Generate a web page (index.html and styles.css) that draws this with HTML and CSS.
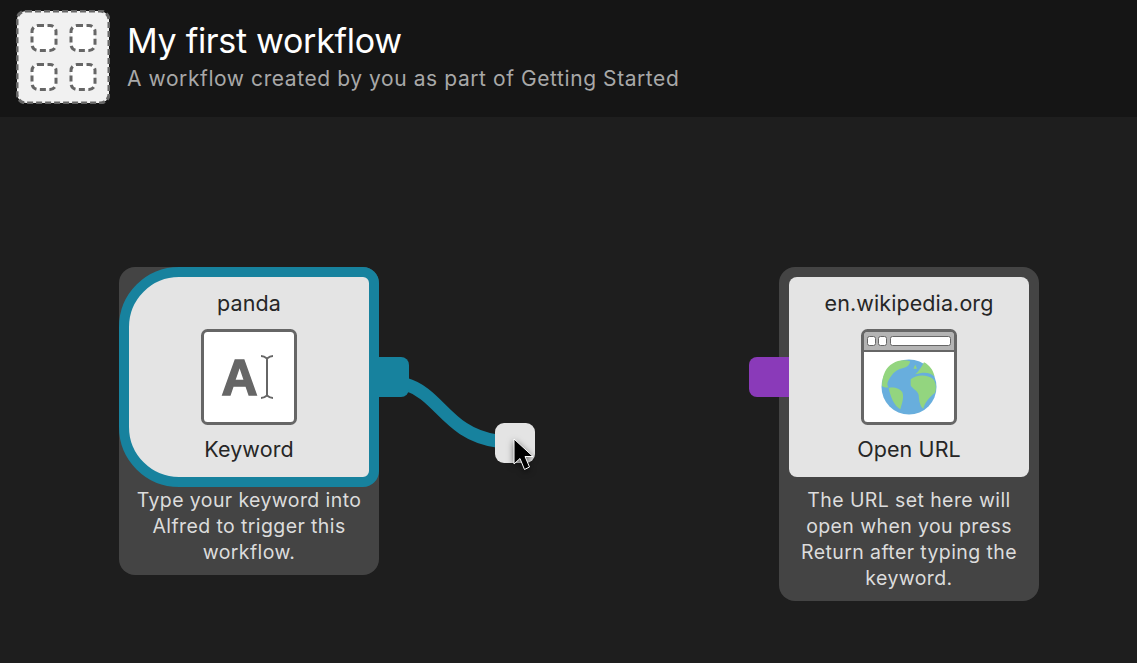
FILE: index.html
```html
<!DOCTYPE html>
<html lang="en">
<head>
<meta charset="utf-8">
<title>My first workflow</title>
<link rel="stylesheet" href="styles.css">
</head>
<body>
<header class="header">
  <svg class="wf-icon" viewBox="0 0 94 94" aria-hidden="true">
    <rect class="wf-back" x="1" y="1" width="92" height="92" rx="9"/>
    <rect class="wf-slot" x="16" y="15.500" width="24" height="25" rx="6"/>
    <rect class="wf-slot" x="55" y="15.500" width="24" height="25" rx="6"/>
    <rect class="wf-slot" x="16" y="54.500" width="24" height="25" rx="6"/>
    <rect class="wf-slot" x="55" y="54.500" width="24" height="25" rx="6"/>
  </svg>
  <div class="header-text">
    <h1 class="title">My first workflow</h1>
    <p class="subtitle">A workflow created by you as part of Getting Started</p>
  </div>
</header>

<main class="canvas">
  <svg class="wire" viewBox="0 0 130 90" aria-hidden="true">
    <path d="M0 18 C 35 28, 42 68, 92 75" />
  </svg>

  <section class="node node-keyword">
    <div class="card card-selected">
      <div class="card-name">panda</div>
      <svg class="tile" viewBox="0 0 96 96" aria-hidden="true">
        <rect class="tile-frame" x="1.500" y="1.500" width="93" height="93" rx="5"/>
        <text class="tile-letter" x="20.500" y="65.500">A</text>
        <path class="tile-beam" d="M60 27 Q63 27 66 29.500 Q69 27 72 27 M66 29.500 V66.500 M60 69 Q63 69 66 66.500 Q69 69 72 69"/>
      </svg>
      <div class="card-type">Keyword</div>
    </div>
    <p class="desc">Type your keyword into Alfred to trigger this workflow.</p>
    <div class="port port-out"></div>
  </section>

  <div class="drop-target"></div>
  <svg class="pointer" viewBox="0 0 26 36" aria-hidden="true">
    <path d="M3 2 V27 L9 21.500 L13.500 32.500 L18.500 30 L14 19.500 H22 Z"/>
  </svg>

  <section class="node node-url">
    <div class="card">
      <div class="card-name">en.wikipedia.org</div>
      <svg class="tile" viewBox="0 0 96 96" aria-hidden="true">
        <rect class="tile-fill" x="1.500" y="1.500" width="93" height="93" rx="5"/>
        <path class="tile-bar" d="M3 21 V7 Q3 3 7 3 H89 Q93 3 93 7 V21 Z"/>
        <path class="tile-rule" d="M2 22 H94"/>
        <rect class="tile-btn" x="6.500" y="7.500" width="8" height="9" rx="2"/>
        <rect class="tile-btn" x="17.500" y="7.500" width="8" height="9" rx="2"/>
        <rect class="tile-btn" x="29.500" y="7.500" width="60" height="9" rx="2"/>
        <circle class="globe-sea" cx="48" cy="58" r="27.500"/>
        <g class="globe-land" transform="translate(-11 -9) scale(.3333)">
          <path d="M180 124 C150 114 118 130 105 155 C99 168 96 180 96 198 C103 203 110 203 116 202 C108 192 114 182 122 170 C132 155 145 147 160 144 C172 141 180 134 180 124 Z"/>
          <path d="M116 204 C132 200 150 206 157 217 C163 232 156 250 151 268 C133 258 122 232 116 204 Z"/>
          <path d="M182 178 C198 164 232 162 250 178 C258 188 260 205 255 218 C240 230 225 245 220 266 C212 262 207 245 206 225 C204 212 188 208 182 196 Z"/>
          <path d="M196 163 C205 155 215 142 222 127 C238 135 250 150 254 170 C240 155 218 156 196 163 Z"/>
          <path d="M190 146 L196 134 L201 146 Z"/>
        </g>
        <rect class="tile-frame-line" x="1.500" y="1.500" width="93" height="93" rx="5"/>
      </svg>
      <div class="card-type">Open URL</div>
    </div>
    <p class="desc">The URL set here will open when you press Return after typing the keyword.</p>
    <div class="port port-in"></div>
  </section>
</main>
</body>
</html>
```
FILE: styles.css
```css
* { box-sizing: border-box; }

html, body {
  margin: 0;
  height: 100%;
  overflow: hidden;
}

body {
  background: #1e1e1e;
  font-family: Inter, "Noto Sans", "Liberation Sans", sans-serif;
  display: flex;
  flex-direction: column;
}

.header {
  height: 117px;
  flex: none;
  background: #151515;
  display: flex;
  align-items: center;
  gap: 17px;
  padding: 0 0 3px 16px;
}

.wf-icon { width: 94px; height: 94px; flex: none; }
.wf-back { fill: #f1f1f1; stroke: #666; stroke-width: 3; stroke-dasharray: 6 3; }
.wf-slot { fill: #fff; stroke: #666; stroke-width: 3; stroke-dasharray: 6 3.500; }

.header-text { display: flex; flex-direction: column; gap: 6px; margin-top: -2px; }
.title { margin: 0; font-size: 34px; line-height: 40px; font-weight: 400; color: #fff; letter-spacing: -0.3px; }
.subtitle { margin: 0; font-size: 21px; line-height: 24px; color: #a8a8a8; letter-spacing: .58px; }

.canvas { position: relative; flex: 1; }

.node {
  position: absolute;
  width: 260px;
  background: #444;
  border-radius: 16px;
  color: #e2e2e2;
}
.node-keyword { left: 119px; top: 150px; height: 308px; }
.node-url { left: 779px; top: 150px; height: 334px; padding: 10px 10px 0; }

.card {
  background: #e4e4e4;
  border-radius: 8px;
  height: 200px;
  display: flex;
  flex-direction: column;
  align-items: center;
  color: #262626;
  padding-top: 13px;
}

.card-selected {
  height: 220px;
  width: 260px;
  border: 10px solid #17829e;
  border-radius: 60px 16px 16px 60px;
}

.card-name { font-size: 21.500px; line-height: 26px; letter-spacing: .1px; }
.card-type { font-size: 21.500px; line-height: 26px; margin-top: 11px; letter-spacing: .1px; }
.tile { width: 96px; height: 96px; margin-top: 13px; flex: none; }

.tile-frame { fill: #fff; stroke: #666; stroke-width: 3; }
.tile-fill { fill: #fff; }
.tile-frame-line { fill: none; stroke: #666; stroke-width: 3; }
.tile-letter { font-family: "Liberation Sans", sans-serif; font-weight: 700; font-size: 50px; fill: #666; stroke: #666; stroke-width: 1.500; }
.tile-beam { fill: none; stroke: #666; stroke-width: 2; }
.tile-bar { fill: #b4b4b4; }
.tile-rule { stroke: #666; stroke-width: 2; }
.tile-btn { fill: #fff; stroke: #666; stroke-width: 1; }
.globe-sea { fill: #68aedd; }
.globe-land { fill: #93d57f; }

.desc {
  margin: 0;
  padding: 0 14px;
  font-size: 19.500px;
  line-height: 26px;
  letter-spacing: .4px;
  text-align: center;
  color: #dcdcdc;
}
.node-url .desc { padding: 10px 4px 0; }

.port { position: absolute; top: 90px; height: 40px; }
.port-out { left: 260px; width: 30px; background: #17829e; border-radius: 0 8px 8px 0; }
.port-in { left: -30px; width: 40px; background: #8a3ab9; border-radius: 8px 0 0 8px; }

.wire {
  position: absolute;
  left: 405px;
  top: 249px;
  width: 130px;
  height: 90px;
}
.wire path { fill: none; stroke: #17829e; stroke-width: 13; }

.drop-target {
  position: absolute;
  left: 495px;
  top: 306px;
  width: 40px;
  height: 40px;
  background: #e4e4e4;
  border-radius: 9px;
}

.pointer {
  position: absolute;
  left: 511px;
  top: 320px;
  width: 26px;
  height: 36px;
  filter: drop-shadow(0 2px 3px rgba(0, 0, 0, .55));
}
.pointer path { fill: #000; stroke: #fff; stroke-width: 1; stroke-linejoin: round; }
```
